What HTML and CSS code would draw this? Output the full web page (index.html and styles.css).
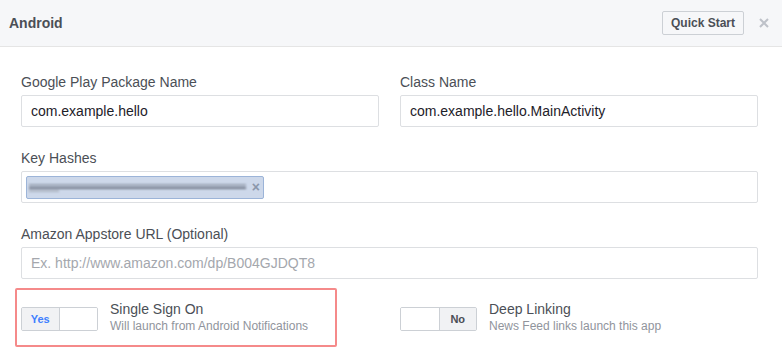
FILE: index.html
```html
<!DOCTYPE html>
<html>
<head>
<meta charset="utf-8">
<link rel="stylesheet" href="styles.css">
</head>
<body>
<div class="header">
  <div class="title">Android</div>
  <div class="actions">
    <button class="qs">Quick Start</button>
    <span class="close">
      <svg width="10" height="10" viewBox="0 0 10 10"><path d="M1 1L9 9M9 1L1 9" stroke="#bec2c9" stroke-width="2" stroke-linecap="butt"/></svg>
    </span>
  </div>
</div>
<div class="content">
  <div class="row two">
    <div class="field">
      <div class="label">Google Play Package Name</div>
      <div class="input">com.example.hello</div>
    </div>
    <div class="field">
      <div class="label">Class Name</div>
      <div class="input">com.example.hello.MainActivity</div>
    </div>
  </div>
  <div class="field">
    <div class="label">Key Hashes</div>
    <div class="input tokens">
      <span class="token"><span class="blur"><i class="l1"></i><i class="l2"></i><i class="l3"></i></span><span class="tx">×</span></span>
    </div>
  </div>
  <div class="field">
    <div class="label">Amazon Appstore URL (Optional)</div>
    <div class="input placeholder">Ex. http://www.amazon.com/dp/B004GJDQT8</div>
  </div>
  <div class="row two toggles">
    <div class="opt highlighted">
      <div class="switch"><span class="half on yes">Yes</span><span class="half"></span></div>
      <div class="desc">
        <div class="dt">Single Sign On</div>
        <div class="dd">Will launch from Android Notifications</div>
      </div>
      <div class="mark"></div>
    </div>
    <div class="opt">
      <div class="switch"><span class="half"></span><span class="half on no">No</span></div>
      <div class="desc">
        <div class="dt">Deep Linking</div>
        <div class="dd">News Feed links launch this app</div>
      </div>
    </div>
  </div>
</div>
</body>
</html>
```
FILE: styles.css
```css
* { box-sizing: border-box; }
html, body { min-height: 355px; }
body {
  margin: 0;
  background: #fff;
  font-family: "Liberation Sans", Arial, Helvetica, sans-serif;
  color: #4b4f56;
}
.header {
  height: 47px;
  background: #f6f7f9;
  border-bottom: 1px solid #e5e5e5;
  display: flex;
  align-items: center;
  justify-content: space-between;
  padding: 0 12px 0 9px;
}
.title {
  font-weight: bold;
  font-size: 14px;
  color: #4b4f56;
}
.actions {
  display: flex;
  align-items: center;
  gap: 15px;
}
.qs {
  height: 24px;
  width: 82px;
  border: 1px solid #ccd0d5;
  border-radius: 2px;
  background: #f6f7f9;
  font-family: inherit;
  font-weight: bold;
  font-size: 12px;
  color: #4b4f56;
  padding: 0;
}
.close { display: flex; width: 11px; height: 10px; align-items: center; }
.content {
  padding: 24px 24px 16px 21px;
  display: flex;
  flex-direction: column;
  gap: 20px;
}
.row.two {
  display: grid;
  grid-template-columns: 1fr 1fr;
  column-gap: 21px;
}
.label {
  font-size: 14px;
  line-height: 18px;
  color: #4b4f56;
  padding-top: 2px;
  margin-bottom: 4px;
}
.input {
  height: 32px;
  border: 1px solid #dddfe2;
  border-radius: 2px;
  font-size: 14px;
  line-height: 30px;
  color: #1d2129;
  padding-left: 9px;
}
.input.placeholder { color: #a4a7ad; }
.input.tokens { padding-left: 4px; display: flex; align-items: center; }
.token {
  width: 238px;
  height: 23px;
  background: #cdd8ea;
  border: 1px solid #9cb4d8;
  border-radius: 2px;
  display: flex;
  align-items: center;
  padding: 0 3px 0 2px;
}
.blur {
  position: relative;
  flex: 1;
  height: 14px;
  filter: blur(1px);
}
.blur i { position: absolute; left: 0; display: block; }
.blur .l1 { top: 4px; width: 217px; height: 2px; background: #9aa3b3; }
.blur .l2 { top: 7px; width: 217px; height: 2px; background: #6f7787; }
.blur .l3 { top: 10px; width: 30px; height: 2px; background: #aeb5c2; }
.tx { color: #8b97ab; font-size: 14px; line-height: 14px; margin-left: 4px; font-weight: bold; }
.toggles { margin-top: 1px; }
.opt {
  position: relative;
  display: flex;
  align-items: flex-start;
  gap: 12px;
}
.switch {
  width: 77px;
  height: 24px;
  border: 1px solid #ccd0d5;
  border-radius: 2px;
  display: flex;
  overflow: hidden;
  margin-top: 7px;
  flex: none;
}
.half { width: 50%; height: 100%; background: #fff; }
.half.on {
  background: #f1f2f4;
  font-size: 11px;
  font-weight: bold;
  line-height: 22px;
  text-align: center;
}
.yes { border-right: 1px solid #ccd0d5; color: #4080ff; }
.no { border-left: 1px solid #ccd0d5; color: #4b4f56; }
.dt { font-size: 14px; line-height: 18px; color: #4b4f56; }
.dd { font-size: 12px; line-height: 16px; color: #90949c; }
.mark {
  position: absolute;
  left: -6px;
  top: -12px;
  width: 322px;
  height: 59px;
  border: 2px solid #f58a8a;
  border-radius: 2px;
  pointer-events: none;
}
```
